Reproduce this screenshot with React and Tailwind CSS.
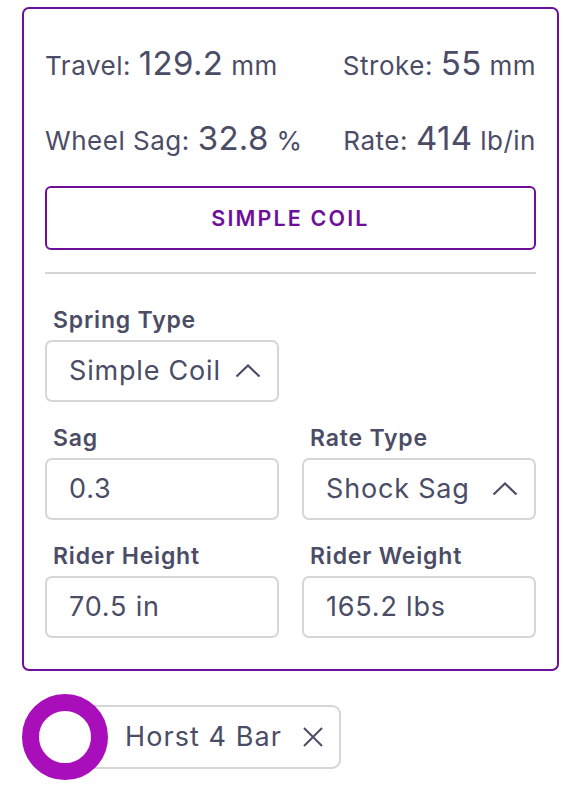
import React from "react";

const purple = "#6e0f99";

const Stat = ({ label, value, unit }) => (
  <p className="text-[26px] leading-[33px] tracking-[0.02em] whitespace-nowrap">
    {label} <span className="text-[33px] leading-none tracking-[0.01em]">{value}</span> {unit}
  </p>
);

const ChevronUp = () => (
  <svg width="26" height="14" viewBox="0 0 26 14" fill="none" className="shrink-0">
    <path d="M1.5 12.5 L13 1.5 L24.5 12.5" stroke="#4b4c66" strokeWidth="2.2" />
  </svg>
);

const Field = ({ label, children }) => (
  <div>
    <div className="text-[23px] leading-[26px] font-semibold tracking-[0.035em] pl-[8px] mb-[7px]">
      {label}
    </div>
    {children}
  </div>
);

const Box = ({ children, select }) => (
  <div className="h-[62px] border-2 border-[#d6d6d6] rounded-[7px] flex items-center justify-between pl-[22px] pr-[16px] text-[27px] tracking-[0.03em]">
    <span>{children}</span>
    {select && <ChevronUp />}
  </div>
);

export default function App() {
  return (
    <div
      className="bg-white min-h-screen text-[#4b4c66] pt-[7px] pl-[22px]"
      style={{ fontFamily: "Inter, 'Noto Sans', sans-serif" }}
    >
      <div className="w-[537px] border-2 border-[#6e0f99] rounded-[7px] px-[21px] pt-[38px] pb-[31px]">
        <div className="flex justify-between items-baseline">
          <Stat label="Travel:" value="129.2" unit="mm" />
          <Stat label="Stroke:" value="55" unit="mm" />
        </div>
        <div className="flex justify-between items-baseline mt-[40px]">
          <Stat label="Wheel Sag:" value="32.8" unit="%" />
          <Stat label="Rate:" value="414" unit="lb/in" />
        </div>

        <button
          className="mt-[29px] w-full h-[64px] border-2 rounded-[6px] text-[21.5px] font-semibold tracking-[0.1em]"
          style={{ borderColor: purple, color: purple }}
        >
          SIMPLE COIL
        </button>

        <div className="mt-[22px] h-[2px] bg-[#d5d5d5]" />

        <div className="mt-[33px] w-[234px]">
          <Field label="Spring Type">
            <Box select>Simple Coil</Box>
          </Field>
        </div>

        <div className="grid grid-cols-2 gap-x-[23px] gap-y-[23px] mt-[23px]">
          <Field label="Sag">
            <Box>0.3</Box>
          </Field>
          <Field label="Rate Type">
            <Box select>Shock Sag</Box>
          </Field>
          <Field label="Rider Height">
            <Box>70.5 in</Box>
          </Field>
          <Field label="Rider Weight">
            <Box>165.2 lbs</Box>
          </Field>
        </div>
      </div>

      <div className="mt-[23px] flex items-center">
        <div className="relative z-10 w-[86px] h-[86px] rounded-full border-[17px] border-[#a80fba] bg-white shrink-0" />
        <div className="-ml-[40px] h-[64px] border-2 border-[#d6d6d6] rounded-[9px] flex items-center pl-[55px] pr-[15px] text-[27px] tracking-[0.04em]">
          <span>Horst 4 Bar</span>
          <svg width="22" height="22" viewBox="0 0 22 22" className="ml-[20px]">
            <path d="M2 2 L20 20 M20 2 L2 20" stroke="#4b4c66" strokeWidth="2" />
          </svg>
        </div>
      </div>
    </div>
  );
}
